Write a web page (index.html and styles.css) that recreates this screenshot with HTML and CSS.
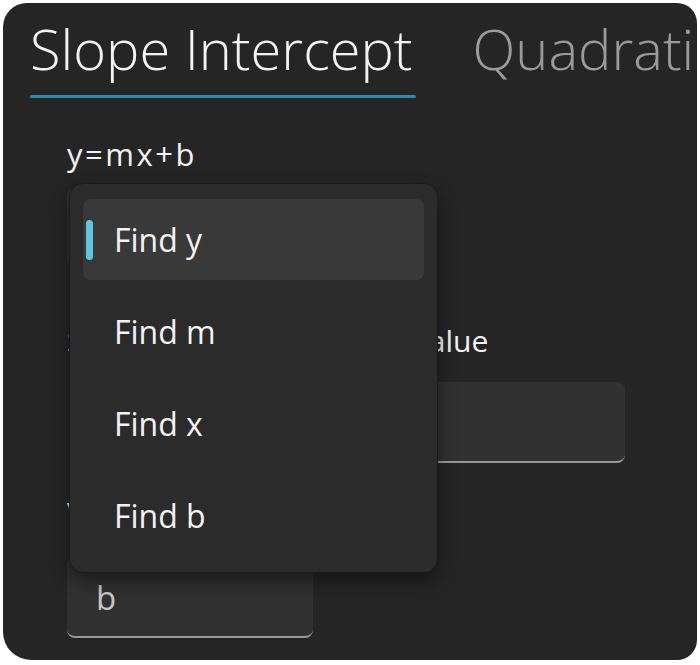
FILE: index.html
```html
<!DOCTYPE html>
<html lang="en">
<head>
<meta charset="utf-8">
<title>Slope Intercept</title>
<link rel="stylesheet" href="styles.css">
</head>
<body>
<div class="panel">
  <nav class="tabs">
    <div class="tab tab-active">
      <span class="tab-label">Slope Intercept</span>
      <span class="tab-underline"></span>
    </div>
    <div class="tab">
      <span class="tab-label tab-label-dim">Quadratic</span>
    </div>
  </nav>

  <section class="content">
    <div class="formula">y=mx+b</div>
    <div class="combo"></div>
    <label class="field-label">Select the new slope (m) value</label>
    <div class="input input-wide"></div>
    <label class="field-label field-label-2">Value of b</label>
    <div class="input input-narrow"><span class="placeholder">b</span></div>
  </section>

  <ul class="dropdown">
    <li class="item item-selected"><span class="accent"></span>Find y</li>
    <li class="item">Find m</li>
    <li class="item">Find x</li>
    <li class="item">Find b</li>
  </ul>
</div>
</body>
</html>
```

FILE: styles.css
```css
* { box-sizing: border-box; }

html, body {
  margin: 0;
  padding: 0;
  background: #ffffff;
}

body {
  font-family: "Open Sans", "Noto Sans", "DejaVu Sans", sans-serif;
  color: #f2f2f2;
}

.panel {
  position: relative;
  margin: 3px;
  width: 694px;
  height: 657px;
  border-radius: 24px 20px 20px 28px;
  background: #262526;
  overflow: hidden;
}

.tabs {
  display: flex;
  gap: 60px;
  padding: 7px 0 0 27px;
  white-space: nowrap;
}

.tab {
  display: flex;
  flex-direction: column;
}

.tab-label {
  font-size: 56px;
  font-weight: 300;
  line-height: normal;
  color: #f3f3f3;
}

.tab-label-dim {
  color: #9c9b9c;
}

.tab-underline {
  margin-top: 9px;
  margin-right: -3px;
  height: 3px;
  border-radius: 2px;
  background: #2d8cad;
}

.content {
  display: flex;
  flex-direction: column;
  align-items: flex-start;
  padding-left: 64px;
}

.formula {
  margin-top: 35px;
  font-size: 31px;
  letter-spacing: 2.5px;
  line-height: normal;
}

.combo {
  margin-top: 13px;
  width: 369px;
  height: 80px;
  border-radius: 8px;
  background: #323132;
}

.field-label {
  margin-top: 52px;
  font-size: 30px;
  line-height: normal;
  color: #f2f2f2;
}

.field-label-2 {
  margin-top: 29px;
}

.input {
  border-radius: 8px;
  background: #323132;
  border-bottom: 2px solid #9a999a;
}

.input-wide {
  margin-top: 21px;
  margin-left: 3px;
  width: 555px;
  height: 81px;
}

.input-narrow {
  display: flex;
  align-items: center;
  margin-top: 25px;
  width: 246px;
  height: 80px;
  padding-left: 29px;
}

.placeholder {
  font-size: 33px;
  color: #c6c5c6;
  margin-top: 0;
}

.dropdown {
  position: absolute;
  left: 66px;
  top: 180px;
  width: 369px;
  height: 390px;
  margin: 0;
  padding: 15px 13px 16px 13px;
  list-style: none;
  display: flex;
  flex-direction: column;
  gap: 11px;
  background: #2c2b2c;
  border: 1px solid #1c1b1c;
  border-radius: 14px;
  box-shadow: 0 8px 18px rgba(0, 0, 0, 0.45);
}

.item {
  position: relative;
  display: flex;
  align-items: center;
  height: 81px;
  padding-left: 31px;
  border-radius: 8px;
  font-size: 32px;
  color: #f3f3f3;
}

.item-selected {
  background: #3a393a;
}

.accent {
  position: absolute;
  left: 3px;
  top: 21px;
  width: 7px;
  height: 40px;
  border-radius: 4px;
  background: #5fc7de;
}
```
